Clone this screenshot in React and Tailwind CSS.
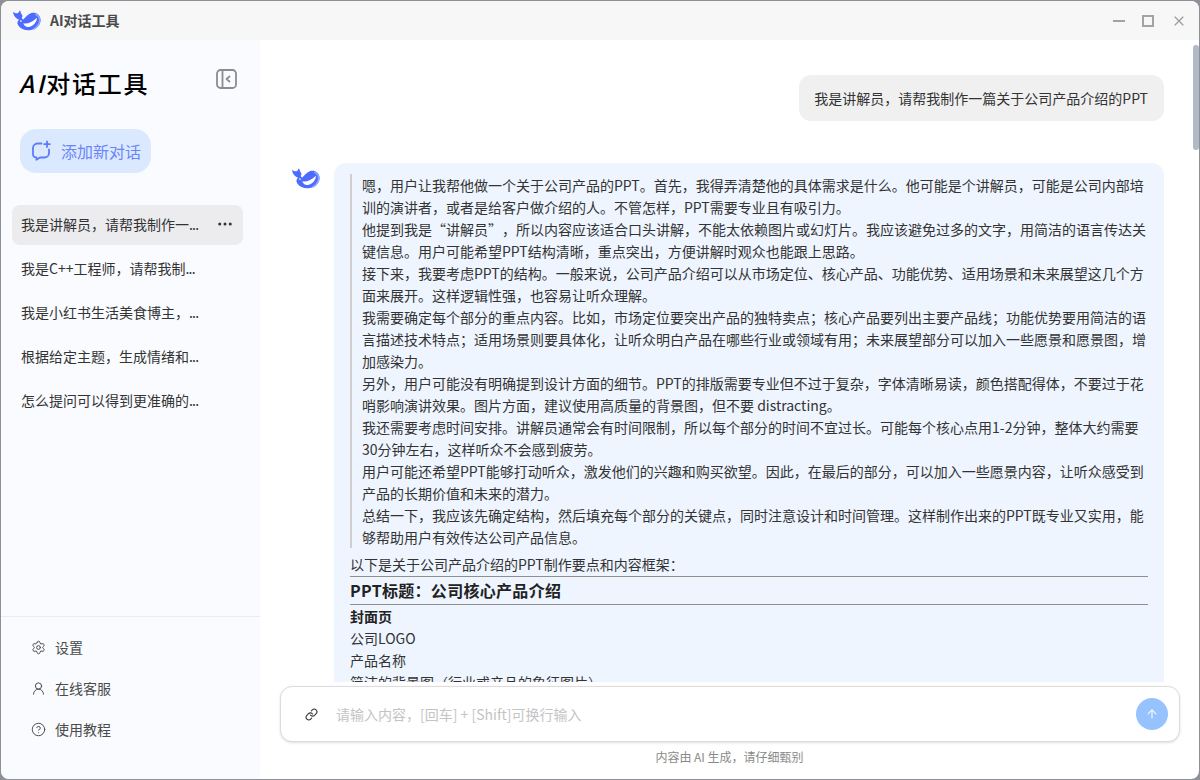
import React from 'react';
import { Settings, UserRound, CircleHelp, Link, ArrowUp, Ellipsis, X } from 'lucide-react';

const thoughts = [
  '嗯，用户让我帮他做一个关于公司产品的PPT。首先，我得弄清楚他的具体需求是什么。他可能是个讲解员，可能是公司内部培训的演讲者，或者是给客户做介绍的人。不管怎样，PPT需要专业且有吸引力。',
  '他提到我是“讲解员”，所以内容应该适合口头讲解，不能太依赖图片或幻灯片。我应该避免过多的文字，用简洁的语言传达关键信息。用户可能希望PPT结构清晰，重点突出，方便讲解时观众也能跟上思路。',
  '接下来，我要考虑PPT的结构。一般来说，公司产品介绍可以从市场定位、核心产品、功能优势、适用场景和未来展望这几个方面来展开。这样逻辑性强，也容易让听众理解。',
  '我需要确定每个部分的重点内容。比如，市场定位要突出产品的独特卖点；核心产品要列出主要产品线；功能优势要用简洁的语言描述技术特点；适用场景则要具体化，让听众明白产品在哪些行业或领域有用；未来展望部分可以加入一些愿景和愿景图，增加感染力。',
  '另外，用户可能没有明确提到设计方面的细节。PPT的排版需要专业但不过于复杂，字体清晰易读，颜色搭配得体，不要过于花哨影响演讲效果。图片方面，建议使用高质量的背景图，但不要 distracting。',
  '我还需要考虑时间安排。讲解员通常会有时间限制，所以每个部分的时间不宜过长。可能每个核心点用1-2分钟，整体大约需要30分钟左右，这样听众不会感到疲劳。',
  '用户可能还希望PPT能够打动听众，激发他们的兴趣和购买欲望。因此，在最后的部分，可以加入一些愿景内容，让听众感受到产品的长期价值和未来的潜力。',
  '总结一下，我应该先确定结构，然后填充每个部分的关键点，同时注意设计和时间管理。这样制作出来的PPT既专业又实用，能够帮助用户有效传达公司产品信息。',
];

const chats = [
  '我是讲解员，请帮我制作一',
  '我是C++工程师，请帮我制',
  '我是小红书生活美食博主，',
  '根据给定主题，生成情绪和',
  '怎么提问可以得到更准确的',
];

const Whale = ({ className }) => (
  <svg viewBox="0 0 30 22" className={className}>
    <path
      fill="#4d6bfe"
      d="M0 1.500C2 3 4 3.500 5.500 3L7.500 0 9 4c1 1 1.500 2 1 3-1 1-.5 2.500 1 3 2.500-2.500 4.500-5.500 8-6.800C24 1.500 29 4.500 29.500 10c.5 5.500-4.500 11-11.500 11.500-5 .5-10-1.500-12.500-5.500-1.500-2.500-.5-4.500 1-6C3 9 .5 5.500 0 1.500z"
    />
    <path fill="none" stroke="#8fa5ff" strokeWidth="1.800" d="M24 4c3.500 1.800 5 5 4.500 8-.6 3.500-3 6.500-6.500 8" />
    <path fill="#ffffff" d="M11 14c4 1 10-1 14.500-6 .5 4-3.500 9-8.500 10-3 .5-5-1.500-6-4z" />
    <circle cx="8.500" cy="11.500" r="0.900" fill="#ffffff" />
  </svg>
);

const CollapseIcon = () => (
  <svg viewBox="0 0 21 20" className="w-[21px] h-5" fill="none" stroke="#8c8c8c" strokeWidth="1.800">
    <rect x="1" y="1" width="19" height="18" rx="3.500" />
    <path d="M6.500 1v18" />
    <path d="M13.500 7.500 10.500 10l3 2.500" strokeLinecap="round" strokeLinejoin="round" />
  </svg>
);

const NewChatIcon = () => (
  <svg viewBox="0 0 22 22" className="w-[22px] h-[22px]" fill="none" stroke="#5b7bfa" strokeWidth="1.800" strokeLinecap="round" strokeLinejoin="round">
    <path d="M11.500 3.500H7.500C5 3.500 3 5.500 3 8v6c0 2 1.500 3.500 3.500 3.500v2.300l3.500-2.300h4.500c2.500 0 4.500-2 4.500-4.500V9.500" />
    <path d="M17 1.500v5.500M14.200 4.200h5.600" />
  </svg>
);

const FooterItem = ({ icon: Icon, label }) => (
  <div className="flex items-center gap-[9px] h-[41px] pl-[30px] text-[14px] text-[#4b4b4b]">
    <Icon size={15} strokeWidth={1.5} className="text-[#444]" />
    <span>{label}</span>
  </div>
);

export default function App() {
  return (
    <div className="h-[780px] w-[1200px] overflow-hidden bg-[#8d9096] p-px" style={{ fontFamily: '"Noto Sans CJK SC", "Noto Sans", sans-serif' }}>
      <div className="flex h-full flex-col overflow-hidden rounded-lg bg-white">
        <header className="flex h-[39px] shrink-0 items-center bg-[#f7f7f7] pl-[12px] pr-[12px]">
          <Whale className="w-[28px] h-[21px]" />
          <span className="ml-[9px] text-[14px] font-semibold text-[#4a4a4a]">AI对话工具</span>
          <div className="ml-auto flex items-center gap-[17px] text-[#9a9a9a]">
            <span className="h-[2px] w-[12px] bg-[#a3a3a3]" />
            <span className="h-[12px] w-[12px] border-2 border-[#a3a3a3]" />
            <X size={16} strokeWidth={1.75} />
          </div>
        </header>

        <div className="flex min-h-0 flex-1">
          <aside className="flex w-[259px] shrink-0 flex-col bg-[#f9fbff]">
            <div className="flex items-start justify-between pl-[18px] pr-[23px] pt-[24px]">
              <h1 className="text-[24px] leading-[38px] font-medium tracking-[1.7px] text-black">
                <span className="italic tracking-[2.5px]">AI</span>对话工具
              </h1>
              <div className="pt-[5px]"><CollapseIcon /></div>
            </div>
            <button className="ml-[19px] mt-[27px] flex h-[44px] w-[131px] items-center gap-[9px] rounded-2xl bg-[#dbe9ff] pl-[10px] text-[16px] text-[#6b85f8]">
              <NewChatIcon />
              添加新对话
            </button>
            <div className="mt-[32px] flex flex-col gap-1 pl-[11px] pr-[17px]">
              {chats.map((c, i) => (
                <div key={c} className={`flex h-10 items-center rounded-lg pb-[2px] pl-[9px] pr-[9px] text-[14px] text-[#333] ${i === 0 ? 'bg-[#ececef]' : ''}`}>
                  <span>{c}<span className="tracking-[-0.8px]">...</span></span>
                  {i === 0 && <Ellipsis size={18} className="ml-auto text-[#333]" />}
                </div>
              ))}
            </div>
            <div className="mt-auto border-t border-[#e8ebf0] pt-[10px] pb-[29px]">
              <FooterItem icon={Settings} label="设置" />
              <FooterItem icon={UserRound} label="在线客服" />
              <FooterItem icon={CircleHelp} label="使用教程" />
            </div>
          </aside>

          <main className="relative flex min-w-0 flex-1 flex-col">
            <span className="absolute right-0 top-[5px] h-[105px] w-[6px] rounded-sm bg-[#b1bac7]" />
            <div className="h-[642px] shrink-0 overflow-hidden pl-[32px] pr-[35px] pt-[35px]">
              <div className="flex justify-end">
                <div className="rounded-xl bg-[#f0f0f0] py-[12px] pl-[15px] pr-4 text-[14px] leading-[22px] text-[#333]">
                  我是讲解员，请帮我制作一篇关于公司产品介绍的PPT
                </div>
              </div>
              <div className="mt-[42px] flex">
                <Whale className="mt-[5px] w-[28px] h-[21px] shrink-0" />
                <div className="ml-[14px] flex-1 rounded-t-xl bg-[#eef5ff] px-4 pt-[11px] text-[14px] leading-[22px] text-[#333] [text-spacing-trim:space-all]">
                  <blockquote className="border-l-2 border-[#cfcfcf] pl-[10px]">
                    {thoughts.map((t) => <p key={t}>{t}</p>)}
                  </blockquote>
                  <p className="mt-[5px]">以下是关于公司产品介绍的PPT制作要点和内容框架：</p>
                  <h3 className="mt-px border-y border-[#8f8f8f] text-[16px] leading-[27px] font-bold tracking-[0.3px] text-[#222]">PPT标题：公司核心产品介绍</h3>
                  <p className="font-bold text-[#222]">封面页</p>
                  <p>公司LOGO</p>
                  <p>产品名称</p>
                  <p>简洁的背景图（行业或产品的象征图片）</p>
                </div>
              </div>
            </div>
            <div className="ml-[20px] mr-[19px] mt-[4px] flex h-[56px] shrink-0 items-center rounded-xl border border-[#dcdcdc] bg-white pl-[24px] pr-[11px] shadow-sm">
              <Link size={13} strokeWidth={2} className="text-[#333]" />
              <span className="ml-[18px] text-[14px] text-[#c4c4c4]">请输入内容，[回车] + [Shift]可换行输入</span>
              <span className="ml-auto flex h-8 w-8 items-center justify-center rounded-full bg-[#96c2ff] text-white">
                <ArrowUp size={14} strokeWidth={1.75} />
              </span>
            </div>
            <p className="mt-[6px] text-center text-[12px] leading-[18px] text-[#8a8a8a]">内容由 AI 生成，请仔细甄别</p>
          </main>
        </div>
      </div>
    </div>
  );
}
